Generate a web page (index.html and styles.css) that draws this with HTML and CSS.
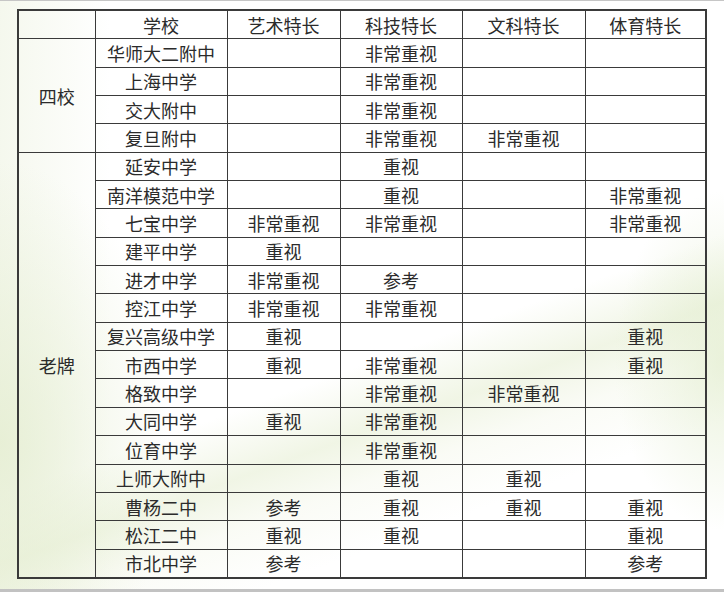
FILE: index.html
```html
<!DOCTYPE html>
<html lang="zh">
<head>
<meta charset="utf-8">
<title>学校特长</title>
<link rel="stylesheet" href="styles.css">
</head>
<body>
<div class="page">
  <div class="content">
    <table class="grid">
      <colgroup>
        <col class="c-group"><col class="c-school"><col class="c-a"><col class="c-b"><col class="c-c"><col class="c-d">
      </colgroup>
      <tr><td></td><td>学校</td><td>艺术特长</td><td>科技特长</td><td>文科特长</td><td>体育特长</td></tr>
      <tr><td rowspan="4">四校</td><td>华师大二附中</td><td></td><td>非常重视</td><td></td><td></td></tr>
      <tr><td>上海中学</td><td></td><td>非常重视</td><td></td><td></td></tr>
      <tr><td>交大附中</td><td></td><td>非常重视</td><td></td><td></td></tr>
      <tr><td>复旦附中</td><td></td><td>非常重视</td><td>非常重视</td><td></td></tr>
      <tr><td rowspan="15">老牌</td><td>延安中学</td><td></td><td>重视</td><td></td><td></td></tr>
      <tr><td>南洋模范中学</td><td></td><td>重视</td><td></td><td>非常重视</td></tr>
      <tr><td>七宝中学</td><td>非常重视</td><td>非常重视</td><td></td><td>非常重视</td></tr>
      <tr><td>建平中学</td><td>重视</td><td></td><td></td><td></td></tr>
      <tr><td>进才中学</td><td>非常重视</td><td>参考</td><td></td><td></td></tr>
      <tr><td>控江中学</td><td>非常重视</td><td>非常重视</td><td></td><td></td></tr>
      <tr><td>复兴高级中学</td><td>重视</td><td></td><td></td><td>重视</td></tr>
      <tr><td>市西中学</td><td>重视</td><td>非常重视</td><td></td><td>重视</td></tr>
      <tr><td>格致中学</td><td></td><td>非常重视</td><td>非常重视</td><td></td></tr>
      <tr><td>大同中学</td><td>重视</td><td>非常重视</td><td></td><td></td></tr>
      <tr><td>位育中学</td><td></td><td>非常重视</td><td></td><td></td></tr>
      <tr><td>上师大附中</td><td></td><td>重视</td><td>重视</td><td></td></tr>
      <tr><td>曹杨二中</td><td>参考</td><td>重视</td><td>重视</td><td>重视</td></tr>
      <tr><td>松江二中</td><td>重视</td><td>重视</td><td></td><td>重视</td></tr>
      <tr><td>市北中学</td><td>参考</td><td></td><td></td><td>参考</td></tr>
    </table>
  </div>
  <div class="bottom-bar"></div>
</div>
</body>
</html>
```
FILE: styles.css
```css
html, body {
  margin: 0;
  padding: 0;
  background: #ffffff;
}
.page {
  width: 724px;
  height: 592px;
  display: flex;
  flex-direction: column;
  border-top: 1px solid #c6c6c6;
  box-sizing: border-box;
  background:
    radial-gradient(ellipse 170px 280px at 0px 440px, rgba(228, 237, 208, 0.8), rgba(255,255,255,0) 100%),
    radial-gradient(ellipse 110px 170px at 724px 360px, rgba(226, 237, 206, 0.7), rgba(255,255,255,0) 100%),
    linear-gradient(160deg, rgba(255,255,255,0) 58%, rgba(234, 241, 218, 0.7) 66%, rgba(244, 247, 234, 0.45) 72%, rgba(255,255,255,0) 80%),
    linear-gradient(90deg, rgba(238, 243, 226, 0.6) 0px, rgba(255,255,255,0) 110px),
    #ffffff;
}
.content {
  flex: 1;
  padding: 8px 0 0 17px;
}
.bottom-bar {
  height: 3px;
  background: #c2c2c2;
}
.grid {
  border-collapse: collapse;
  table-layout: fixed;
  width: 690px;
  border: 2px solid #3a3a3a;
  font-family: "Noto Sans CJK SC", "Noto Sans", sans-serif;
  font-size: 18px;
  color: #2b2b2b;
}
.grid td {
  border: 1px solid #3a3a3a;
  height: 27.35px;
  padding: 0;
  text-align: center;
  vertical-align: middle;
  line-height: 20px;
  white-space: nowrap;
}
.c-group { width: 77px; }
.c-school { width: 132px; }
.c-a { width: 113px; }
.c-b { width: 122px; }
.c-c { width: 123px; }
.c-d { width: 121px; }
```
